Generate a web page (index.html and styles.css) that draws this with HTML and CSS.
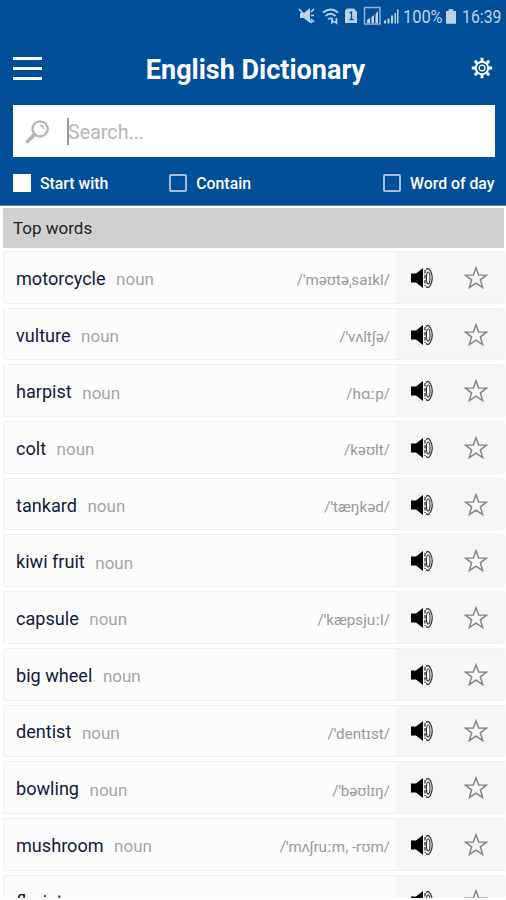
FILE: index.html
```html
<!DOCTYPE html>
<html lang="en">
<head>
<meta charset="utf-8">
<title>English Dictionary</title>
<link rel="stylesheet" href="styles.css">
</head>
<body>
<svg class="defs" aria-hidden="true">
  <symbol id="speaker" viewBox="0 0 24 22">
    <path d="M1 6.500h5l7-5.500v20l-7-5.500H1z" fill="#000"/>
    <path d="M15 3v16" fill="none" stroke="#222" stroke-width="1.200" stroke-dasharray="3.500 1.500"/>
    <ellipse cx="18.200" cy="11" rx="1.800" ry="6" fill="none" stroke="#333" stroke-width="1.100"/>
    <path d="M16 2.500q2.500-2.500 4.500 1.500 3.500 7 0 14-2 4-4.500 1.500" fill="none" stroke="#333" stroke-width="1.200"/>
  </symbol>
  <symbol id="star" viewBox="0 0 24 24">
    <path d="M12 1.800l2.700 7.100 7.800.2-6.100 4.700 2.200 7.700-6.600-4.400-6.600 4.400 2.200-7.700-6.100-4.700 7.800-.2z" fill="none" stroke="#858585" stroke-width="1.500"/>
  </symbol>
</svg>
<div class="app">
  <header class="header">
    <div class="status">
      <svg class="status-icons" viewBox="0 0 104 22">
        <g fill="#bcd3e6" stroke="none">
          <path d="M3 8h4l6-5v15l-6-5H3z"/>
          <path d="M50 3.500h7l3 3.500v11H48V5.500z"/>
          <path d="M70 18v-3l3-2v5zM74.500 18v-6l2.500-2v8zM78.500 18V9l2.500-3v12z"/>
          <path d="M87 18.500v-3h2v3zM90.500 18.500v-5h2v5zM94 18.500V10.500h2v8zM97.500 18.500V8h1.500v10.500zM100 18.500V4.500h1.500v14z"/>
        </g>
        <g fill="none" stroke="#bcd3e6" stroke-width="1.700">
          <path d="M2 4l13 14M14 7l3-3M14 10.500h3M14 14l3 3"/>
          <path d="M26 7.500q8-6 15 0M28.500 11q5-4.500 10 0M31 14.500q2.500-2.500 5 0M35 13v4.500l2-1.500M39.500 13v5l-2-1.500"/>
          <rect x="67.500" y="2.500" width="15.500" height="16.500" stroke-width="1.500" stroke="#8fb1d2"/>
        </g>
        <path d="M52.500 8l2-1v7.500m-2 0h4" fill="none" stroke="#004f98" stroke-width="1.300"/>
      </svg>
      <span class="percent">100%</span>
      <svg class="battery" viewBox="0 0 11 16"><path d="M3 0h5v2h3v14H0V2h3z" fill="#bcd3e6"/></svg>
      <span class="clock">16:39</span>
    </div>
    <div class="titlebar">
      <div class="menu"><i></i><i></i><i></i></div>
      <h1>English Dictionary</h1>
      <svg class="gear" viewBox="0 0 22 22" fill="none" stroke="#fff">
        <circle cx="11" cy="11" r="6.200" stroke-width="2"/>
        <circle cx="11" cy="11" r="2.900" stroke-width="1.200"/>
        <path stroke-width="3" d="M11 .8v3.400M11 17.800v3.400M.8 11h3.400M17.800 11h3.400M3.800 3.800l2.400 2.400M15.800 15.800l2.400 2.400M3.800 18.200l2.400-2.400M15.800 6.200l2.400-2.400"/>
      </svg>
    </div>
    <div class="search">
      <svg class="lens" viewBox="0 0 24 24" fill="none" stroke="#b5b5b5">
        <circle cx="14.500" cy="9.500" r="7.300" stroke-width="2.200"/>
        <path d="M14.500 6q3 .3 3.500 3.500" stroke-width="1.300"/>
        <path d="M9 15L2.500 21.500" stroke-width="3.400" stroke-linecap="round"/>
      </svg>
      <span class="caret"></span><span class="hint">Search...</span>
    </div>
    <div class="options">
      <span class="option"><i class="box checked"></i>Start with</span>
      <span class="option second"><i class="box"></i>Contain</span>
      <span class="option last"><i class="box"></i>Word of day</span>
    </div>
  </header>
  <div class="section">Top words</div>
  <main class="list" id="list"></main>
</div>
<script src="words.js"></script>
</body>
</html>
```
FILE: styles.css
```css
* { box-sizing: border-box; }
body { margin: 0; background: #fff; font-family: Roboto, "Noto Sans", sans-serif; }
.defs { position: absolute; width: 0; height: 0; }
.app { width: 506px; height: 898px; overflow: hidden; }
.header { height: 206px; background: #004f98; color: #fff; padding: 0 11.500px 0 12.500px; border-bottom: 1px solid #5a85b8; }
.status { height: 32px; margin-right: -7px; display: flex; align-items: center; justify-content: flex-end; color: #bcd3e6; font-size: 18px; }
.status-icons { width: 104px; height: 22px; margin-right: 2px; }
.percent, .clock { display: block; white-space: nowrap; transform-origin: left center; }
.percent { width: 39px; transform: scaleX(.91); }
.clock { width: 40px; transform: scaleX(.88); }
.battery { width: 10px; height: 15px; margin: 0 6px 0 4px; }
.titlebar { height: 73px; display: flex; align-items: center; justify-content: space-between; }
.menu { width: 29px; height: 23px; display: flex; flex-direction: column; justify-content: space-between; margin-bottom: 1px; }
.menu i { height: 3px; background: #fff; }
h1 { margin: 2px 2px 0 0; font-size: 27px; line-height: 32px; font-weight: 700; }
.gear { width: 22px; height: 22px; margin: 0 1px 2px 0; }
.search { height: 52px; background: #fff; display: flex; align-items: center; padding-left: 12.500px; }
.lens { width: 25px; height: 25px; }
.caret { width: 2px; height: 27px; background: #999; margin-left: 17px; }
.hint { color: #b5b5b5; font-size: 19.700px; margin: 2px 0 0 -1px; }
.options { height: 52px; display: flex; align-items: center; font-size: 15.800px; font-weight: 500; }
.option { display: flex; align-items: center; gap: 9.500px; }
.second { margin-left: 61px; gap: 9px; }
.last { margin-left: auto; }
.box { width: 18px; height: 18px; border: 2px solid #a3bfdd; border-radius: 2px; }
.box.checked { background: #fff; border-color: #fff; border-radius: 0; }
.section { height: 40px; margin: 2px 2px 3px 3px; padding-left: 10px; background: #d0d0d0; color: #222; font-size: 17px; line-height: 41px; }
.list { display: grid; grid-auto-rows: 52.700px; row-gap: 4px; padding: 0 1px 0 3px; }
.row { display: flex; background: #fdfcfd; border: 1px solid #f1f1f1; border-radius: 2px; }
.text { flex: 1; display: flex; align-items: center; padding: 2px 6px 0 12px; white-space: nowrap; }
.word { color: #10193c; font-size: 18.100px; }
.kind { color: #a5a5a5; font-size: 17px; margin: 2px 0 0 10.500px; }
.ipa { color: #999; font-size: 15.200px; margin: 2px 0 0 auto; }
.action { width: 54px; display: flex; align-items: center; justify-content: center; background: #f7f6f7; padding: 1px 2px 0 0; }
.speaker { width: 24px; height: 22px; }
.star { width: 24px; height: 24px; }
```
FILE: words.js
```js
const words = [
  ["motorcycle", "/ˈməʊtəˌsaɪkl/"],
  ["vulture", "/ˈvʌltʃə/"],
  ["harpist", "/hɑːp/"],
  ["colt", "/kəʊlt/"],
  ["tankard", "/ˈtæŋkəd/"],
  ["kiwi fruit", ""],
  ["capsule", "/ˈkæpsjuːl/"],
  ["big wheel", ""],
  ["dentist", "/ˈdentɪst/"],
  ["bowling", "/ˈbəʊlɪŋ/"],
  ["mushroom", "/ˈmʌʃruːm, -rʊm/"],
  ["florist", "/ˈflɒrɪst/"]
];
document.getElementById("list").innerHTML = words.map(([word, ipa]) => `
  <div class="row">
    <div class="text"><span class="word">${word}</span><span class="kind">noun</span><span class="ipa">${ipa}</span></div>
    <div class="action"><svg class="speaker"><use href="#speaker"/></svg></div>
    <div class="action"><svg class="star"><use href="#star"/></svg></div>
  </div>`).join("");
```
